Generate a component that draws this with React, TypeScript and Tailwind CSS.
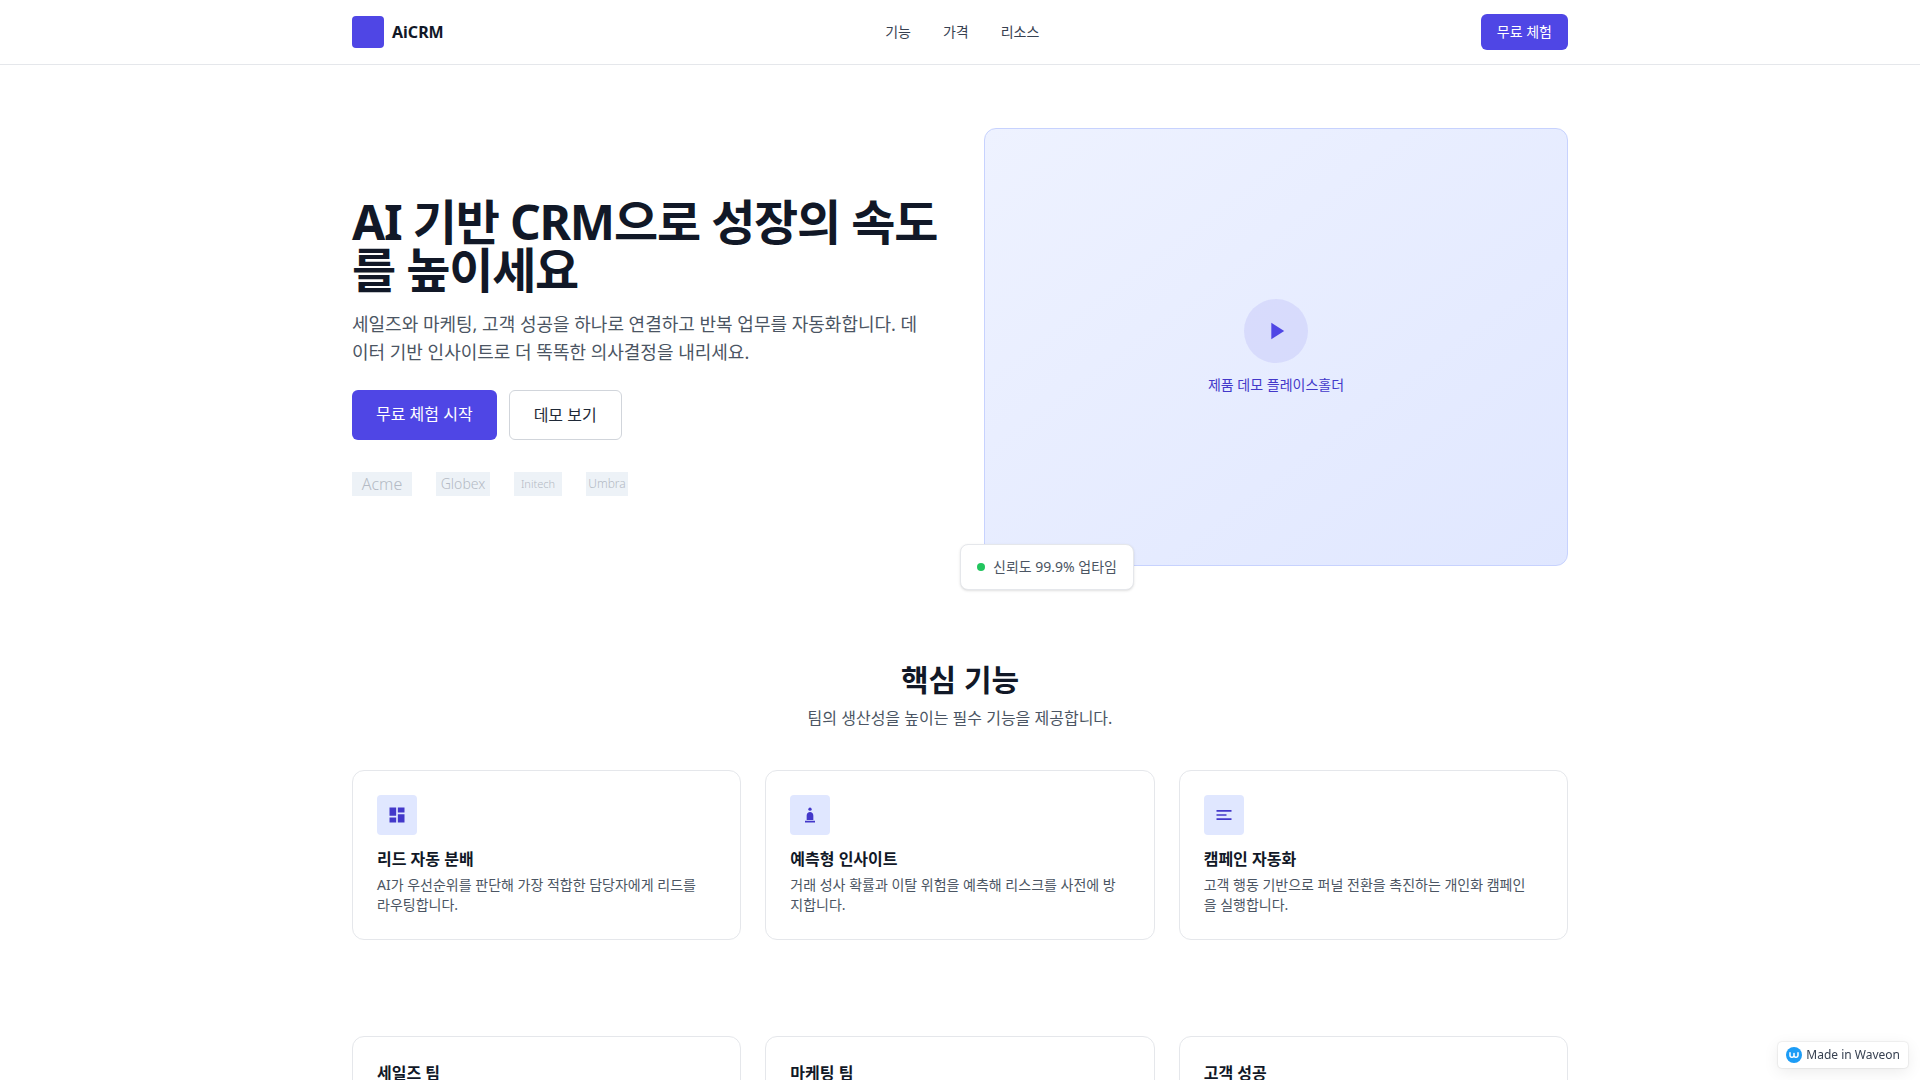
import type { ReactNode } from 'react';

interface Feature {
  title: string;
  body: [string, string];
  icon: ReactNode;
}

const NAV = ['기능', '가격', '리소스'];

const FEATURES: Feature[] = [
  {
    title: '리드 자동 분배',
    body: ['AI가 우선순위를 판단해 가장 적합한 담당자에게 리드를', '라우팅합니다.'],
    icon: <path d="M3 13h8V3H3v10zm0 8h8v-6H3v6zm10 0h8V11h-8v10zm0-18v6h8V3h-8z" />,
  },
  {
    title: '예측형 인사이트',
    body: ['거래 성사 확률과 이탈 위험을 예측해 리스크를 사전에 방', '지합니다.'],
    icon: (
      <>
        <circle cx="12" cy="5" r="2" />
        <path d="M12 8.500c-2.200 0-4 1.800-4 4V18h8v-5.500c0-2.200-1.800-4-4-4zM6 19h12v2H6z" />
      </>
    ),
  },
  {
    title: '캠페인 자동화',
    body: ['고객 행동 기반으로 퍼널 전환을 촉진하는 개인화 캠페인', '을 실행합니다.'],
    icon: <path d="M3 6h18v2H3zM3 11h12v2H3zM3 16h18v2H3z" />,
  },
];

const TEAMS = [
  { title: '세일즈 팀', body: '파이프라인을 한눈에 관리하세요.' },
  { title: '마케팅 팀', body: '캠페인 성과를 실시간으로 확인하세요.' },
  { title: '고객 성공', body: '이탈 신호를 먼저 발견하세요.' },
];

function Header() {
  return (
    <header className="fixed inset-x-0 top-0 z-10 border-b border-[#e5e7eb] bg-white">
      <div className="mx-auto flex h-16 max-w-7xl items-center justify-between px-8">
        <a href="#top" className="flex items-center gap-2">
          <span className="size-8 rounded bg-[#4f46e5]" />
          <span className="font-bold">AiCRM</span>
        </a>
        <nav className="flex items-center gap-8 text-sm text-[#374151]">
          {NAV.map(item => <a key={item} href={`#${item}`}>{item}</a>)}
        </nav>
        <a href="#trial" className="rounded-md bg-[#4f46e5] px-4 py-2 text-sm text-white">무료 체험</a>
      </div>
    </header>
  );
}

function Hero() {
  return (
    <section className="mx-auto grid max-w-7xl grid-cols-2 items-center gap-12 px-8 py-16">
      <div>
        <h1 className="text-5xl leading-none font-bold tracking-tight whitespace-nowrap">
          AI 기반 CRM으로 성장의 속도<br />를 높이세요
        </h1>
        <p className="mt-4 text-lg leading-7 text-[#4b5563]">
          세일즈와 마케팅, 고객 성공을 하나로 연결하고 반복 업무를 자동화합니다. 데<br />
          이터 기반 인사이트로 더 똑똑한 의사결정을 내리세요.
        </p>
        <div className="mt-6 flex gap-3">
          <a href="#trial" className="rounded-md bg-[#4f46e5] px-6 py-3 text-white">무료 체험 시작</a>
          <a href="#demo" className="rounded-md border border-[#d1d5db] px-6 py-3 text-[#1f2937]">데모 보기</a>
        </div>
        <div className="mt-8 flex gap-6 font-light text-[#b4bac4]">
          <span className="flex h-6 w-15 items-center justify-center bg-[#edf2f7] text-base">Acme</span>
          <span className="flex h-6 w-[54px] items-center justify-center bg-[#edf2f7] text-sm">Globex</span>
          <span className="flex h-6 w-12 items-center justify-center bg-[#edf2f7] text-[11px]">Initech</span>
          <span className="flex h-6 w-[42px] items-center justify-center bg-[#edf2f7] text-xs">Umbra</span>
        </div>
      </div>

      <div className="relative">
        <div className="flex aspect-[4/3] flex-col items-center justify-center gap-3 rounded-xl border border-[#c7d2fe] bg-linear-to-br/srgb from-[#eef2ff] to-[#e0e7ff]">
          <button aria-label="재생" className="flex size-16 items-center justify-center rounded-full bg-[#4f46e5]/10 text-[#4f46e5]">
            <svg viewBox="0 0 24 24" fill="currentColor" className="size-7"><path d="M8 5v14l11-7z" /></svg>
          </button>
          <p className="text-sm text-[#4338ca]">제품 데모 플레이스홀더</p>
        </div>
        <div className="absolute -bottom-6 -left-6 flex items-center gap-2 rounded-lg border border-[#e5e7eb] bg-white px-4 py-3 text-sm text-[#4b5563] shadow-sm">
          <span className="size-2 rounded-full bg-[#22c55e]" />
          신뢰도 99.9% 업타임
        </div>
      </div>
    </section>
  );
}

function Features() {
  return (
    <section className="mx-auto max-w-7xl px-8 py-8">
      <div className="text-center">
        <h2 className="text-3xl font-bold">핵심 기능</h2>
        <p className="mt-2 text-[#4b5563]">팀의 생산성을 높이는 필수 기능을 제공합니다.</p>
      </div>
      <div className="mt-10 grid grid-cols-3 gap-6">
        {FEATURES.map(f => (
          <div key={f.title} className="rounded-xl border border-[#e5e7eb] p-6">
            <div className="flex size-10 items-center justify-center rounded bg-[#e0e7ff] text-[#4338ca]">
              <svg viewBox="0 0 24 24" fill="currentColor" className="size-5">{f.icon}</svg>
            </div>
            <h3 className="mt-3 font-semibold">{f.title}</h3>
            <p className="mt-1 text-sm text-[#4b5563]">{f.body[0]}<br />{f.body[1]}</p>
          </div>
        ))}
      </div>
    </section>
  );
}

export default function App() {
  return (
    <div id="top" className="min-h-screen bg-white font-['Noto_Sans','Noto_Sans_CJK_KR',sans-serif] text-[#111827]">
      <Header />
      <main className="pt-16">
        <Hero />
        <Features />
        <section className="mx-auto grid max-w-7xl grid-cols-3 gap-6 px-8 py-16">
          {TEAMS.map(t => (
            <div key={t.title} className="rounded-xl border border-[#e5e7eb] p-6">
              <h3 className="font-semibold">{t.title}</h3>
              <p className="mt-1 text-sm text-[#4b5563]">{t.body}</p>
            </div>
          ))}
        </section>
      </main>

      <a
        href="#waveon"
        className="fixed right-3 bottom-3 flex items-center gap-1 rounded bg-white px-2 py-1 text-xs leading-[18px] text-[#374151] shadow-[0_0_2px_rgba(0,0,0,0.2),0_4px_16px_rgba(0,0,0,0.08)]"
      >
        <svg viewBox="0 0 16 16" className="size-4">
          <circle cx="8" cy="8" r="8" fill="#1c9cf6" />
          <path
            d="M4 5.800v2.700a1.700 1.700 0 0 0 1.700 1.700h.6a1.700 1.700 0 0 0 1.700-1.700V6.500M8 8.500a1.700 1.700 0 0 0 1.700 1.700h.6a1.700 1.700 0 0 0 1.700-1.700V5.800"
            fill="none"
            stroke="#fff"
            strokeWidth="1.5"
            strokeLinecap="round"
          />
        </svg>
        Made in Waveon
      </a>
    </div>
  );
}
